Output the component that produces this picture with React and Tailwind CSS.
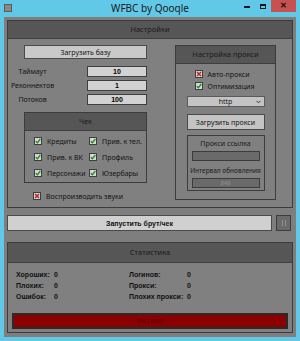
import React from "react";

const F = { fontFamily: '"Noto Sans", "Open Sans", sans-serif' };
const B = { fontFamily: '"Liberation Sans", Arial, sans-serif' };

function Box({ kind = "check" }) {
  return (
    <span className="w-[8px] h-[8px] bg-[#d6d6d6] border border-[#3e3e3e] flex items-center justify-center shrink-0">
      {kind === "check" ? (
        <svg width="6" height="6" viewBox="0 0 6 6">
          <path d="M0.8 3.2 L2.4 4.8 L5.3 1" stroke="#1f8f1f" strokeWidth="1.4" fill="none" />
        </svg>
      ) : (
        <svg width="6" height="6" viewBox="0 0 6 6">
          <path d="M1 1 L5 5 M5 1 L1 5" stroke="#c41c1c" strokeWidth="1.4" fill="none" />
        </svg>
      )}
    </span>
  );
}

function Check({ label, kind }) {
  return (
    <div className="flex items-center gap-[5px] h-[10px]">
      <Box kind={kind} />
      <span className="text-[7px] text-[#141414] leading-none whitespace-nowrap">{label}</span>
    </div>
  );
}

function Field({ label, value }) {
  return (
    <div className="flex items-center h-[11px]">
      <span className="w-[63px] -ml-[23px] text-center text-[7px] text-[#141414] leading-none whitespace-nowrap">{label}</span>
      <span className="ml-auto w-[60px] h-[11px] bg-[#d2d2d2] border border-[#3e3e3e] flex items-center justify-center text-[7px] font-bold text-black leading-none" style={B}>
        {value}
      </span>
    </div>
  );
}

function Header({ children, h = "h-[18px]" }) {
  return (
    <div className={`${h} bg-[#565656] border-b border-[#3e3e3e] flex items-center justify-center text-[7.5px] text-[#1a1a1a] leading-none whitespace-nowrap`}>
      {children}
    </div>
  );
}

function Stat({ label, value, w }) {
  return (
    <div className="flex items-center h-[10px]">
      <span className={`${w} text-[7px] font-bold text-[#111] leading-none whitespace-nowrap`} style={B}>{label}</span>
      <span className="text-[7px] font-bold text-[#111] leading-none" style={B}>{value}</span>
    </div>
  );
}

export default function App() {
  return (
    <div className="w-[300px] h-[341px] bg-[#62c8e8] flex flex-col overflow-hidden" style={F}>
      {/* title bar */}
      <div className="h-[17px] flex items-start relative shrink-0">
        <div className="mt-[4px] ml-[4px] w-[8px] h-[8px] bg-[#8a8a8a] border border-[#5a5a5a]" />
        <div className="absolute left-0 right-0 top-[3px] text-center text-[10px] leading-none text-[#1a1a1a]">WFBC by Qooqle</div>
        <div className="ml-auto mr-[4px] flex">
          <div className="w-[16px] h-[12px] flex items-end justify-center pb-[4px]">
            <div className="w-[6px] h-[2px] bg-[#1a1a1a]" />
          </div>
          <div className="w-[14px] h-[12px] flex items-center justify-center ml-[1px]">
            <div className="w-[6px] h-[5px] border border-[#1a1a1a] border-t-2" />
          </div>
          <div className="w-[25px] h-[12px] bg-[#c75050] flex items-center justify-center ml-[1px] text-[8px] font-bold text-[#111] leading-none" style={B}>✕</div>
        </div>
      </div>
      {/* body */}
      <div className="mx-[4px] h-[320px] bg-[#7e7e7e] pt-[3px] px-[3px] flex flex-col">
        {/* settings */}
        <div className="h-[188px] border border-[#3c3c3c] bg-[#808080] flex flex-col">
          <Header>Настройки</Header>
          <div className="flex pt-[6px]">
            {/* left column */}
            <div className="ml-[16px] w-[123px] flex flex-col">
              <div className="h-[14px] bg-[#c9c9c9] border border-[#4a4a4a] flex items-center justify-center text-[7px] text-[#141414] leading-none">Загрузить базу</div>
              <div className="mt-[7px] flex flex-col gap-[3px]">
                <Field label="Таймаут" value="10" />
                <Field label="Реконнектов" value="1" />
                <Field label="Потоков" value="100" />
              </div>
              <div className="mt-[7px] h-[71px] border border-[#3c3c3c] flex flex-col">
                <Header>Чек</Header>
                <div className="flex pl-[9px] pt-[5px]">
                  <div className="w-[55px] flex flex-col gap-[6px]">
                    <Check label="Кредиты" />
                    <Check label="Прив. к ВК" />
                    <Check label="Персонажи" />
                  </div>
                  <div className="flex flex-col gap-[6px]">
                    <Check label="Прив. к тел." />
                    <Check label="Профиль" />
                    <Check label="Юзербары" />
                  </div>
                </div>
              </div>
              <div className="mt-[8px] ml-[9px]">
                <Check label="Воспроизводить звуки" kind="x" />
              </div>
            </div>
            {/* right column */}
            <div className="ml-[28px] w-[101px] h-[155px] border border-[#3c3c3c] flex flex-col">
              <Header>Настройка прокси</Header>
              <div className="flex flex-col items-center">
                <div className="mt-[5px] flex flex-col gap-[2px] ml-[-2px]">
                  <Check label="Авто-прокси" kind="x" />
                  <Check label="Оптимизация" />
                </div>
                <div className="mt-[5px] w-[78px] h-[11px] bg-[#c4c4c4] border border-[#5a5a5a] flex items-center relative">
                  <span className="w-full text-center text-[7px] text-[#141414] leading-none">http</span>
                  <svg className="absolute right-[3px]" width="5" height="4" viewBox="0 0 5 4">
                    <path d="M0.5 0.8 L2.5 2.8 L4.5 0.8" stroke="#333" strokeWidth="1" fill="none" />
                  </svg>
                </div>
                <div className="mt-[7px] w-[78px] h-[16px] bg-[#c4c4c4] border border-[#4a4a4a] flex items-center justify-center text-[7px] text-[#141414] leading-none whitespace-nowrap">Загрузить прокси</div>
                <div className="mt-[5px] w-[78px] h-[56px] border border-[#3c3c3c] flex flex-col items-center">
                  <span className="mt-[4px] text-[7px] text-[#1a1a1a] leading-none whitespace-nowrap">Прокси ссылка</span>
                  <div className="mt-[4px] w-[68px] h-[10px] bg-[#6a6a6a] border border-[#3c3c3c]" />
                  <span className="mt-[7px] text-[6.5px] text-[#1a1a1a] leading-none whitespace-nowrap">Интервал обновления</span>
                  <div className="mt-[3px] w-[68px] h-[10px] bg-[#6a6a6a] border border-[#3c3c3c] flex items-center justify-center text-[6px] text-[#8a8a8a] font-bold leading-none" style={B}>240</div>
                </div>
              </div>
            </div>
          </div>
        </div>
        {/* run row */}
        <div className="mt-[7px] flex h-[16px]">
          <div className="w-[265px] bg-[#d0d0d0] border border-[#4a4a4a] flex items-center justify-center text-[7px] font-bold text-[#111] leading-none" style={B}>
            Запустить брут/чек
          </div>
          <div className="ml-[4px] w-[15px] bg-[#6a6a6a] border border-[#3c3c3c] flex items-center justify-center gap-[2px]">
            <div className="w-[1px] h-[6px] bg-[#8e8e8e]" />
            <div className="w-[1px] h-[6px] bg-[#8e8e8e]" />
          </div>
        </div>
        {/* stats */}
        <div className="mt-[11px] h-[91px] border border-[#3c3c3c] bg-[#808080] flex flex-col">
          <Header h="h-[20px]">Статистика</Header>
          <div className="flex pl-[8px] pt-[6px]">
            <div className="w-[113px] flex flex-col gap-[1px]">
              <Stat label="Хороших:" value="0" w="w-[38px]" />
              <Stat label="Плохих:" value="0" w="w-[38px]" />
              <Stat label="Ошибок:" value="0" w="w-[38px]" />
            </div>
            <div className="flex flex-col gap-[1px]">
              <Stat label="Логинов:" value="0" w="w-[58px]" />
              <Stat label="Прокси:" value="0" w="w-[58px]" />
              <Stat label="Плохих прокси:" value="0" w="w-[58px]" />
            </div>
          </div>
          <div className="mt-[12px] mx-[4px] h-[16px] bg-[#8b0000] border-2 border-[#2b2b2b] flex items-center justify-center text-[6px] text-[#4a0000] leading-none" style={B}>
            0% | (0/0)
          </div>
        </div>
      </div>
    </div>
  );
}
